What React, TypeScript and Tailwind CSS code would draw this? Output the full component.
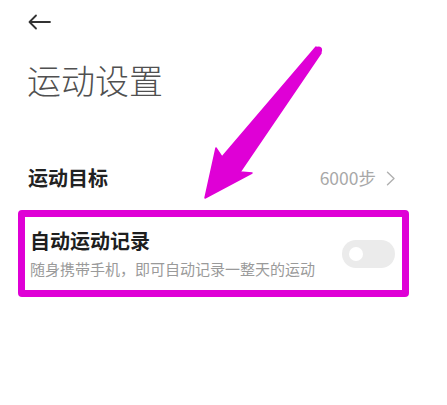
import React from "react";

export default function App() {
  const font = { fontFamily: '"Noto Sans CJK SC", "Noto Sans", sans-serif' };
  return (
    <div className="relative w-[447px] h-[405px] bg-white overflow-hidden" style={font}>
      <div className="flex flex-col">
        <div className="h-[44px] pl-[28px] flex items-center">
          <svg width="23" height="16" viewBox="0 0 23 16" fill="none">
            <path d="M22 8H2M8 1.5L1.5 8L8 14.5" stroke="#333" strokeWidth="1.8" strokeLinecap="round" strokeLinejoin="round" />
          </svg>
        </div>
        <div className="mt-[19px] pl-[27px] text-[34px] leading-[34px] font-light text-[#505050]">运动设置</div>
        <div className="mt-[71px] pl-[28px] mr-[51px] flex items-center justify-between">
          <span className="text-[20px] leading-[20px] font-semibold text-[#222]">运动目标</span>
          <span className="flex items-center gap-[10px] text-[17.5px] leading-[18px] text-[#a8a8a8]">
            6000步
            <svg width="10" height="15" viewBox="0 0 10 15" fill="none">
              <path d="M1.5 1.2L8 7.5L1.5 13.8" stroke="#b0b0b0" strokeWidth="1.4" strokeLinecap="round" strokeLinejoin="round" />
            </svg>
          </span>
        </div>
        <div className="mt-[22px] ml-[18px] w-[391px] h-[87px] border-[7px] border-[#df00d6] rounded-[4px] pl-[5px] pr-[7px] flex items-center justify-between">
          <div className="flex flex-col gap-[9.5px]">
            <span className="text-[20px] leading-[20px] font-semibold text-[#1e1e1e]">自动运动记录</span>
            <span className="text-[15px] leading-[15px] text-[#9a9a9a]">随身携带手机，即可自动记录一整天的运动</span>
          </div>
          <div className="w-[53px] h-[28px] rounded-full bg-[#ebebeb] flex items-center pl-[7px]">
            <div className="w-[14px] h-[14px] rounded-full bg-white" />
          </div>
        </div>
      </div>
      <svg className="absolute left-0 top-0 pointer-events-none" width="447" height="405" viewBox="0 0 447 405">
        <polygon
          points="316,47 321,53 240,172 252,173 205,198 216,148 222,157"
          fill="#df00d6"
          stroke="#df00d6"
          strokeWidth="1.5"
          strokeLinejoin="round"
        />
        <circle cx="318.5" cy="50" r="3.6" fill="#df00d6" />
      </svg>
    </div>
  );
}
